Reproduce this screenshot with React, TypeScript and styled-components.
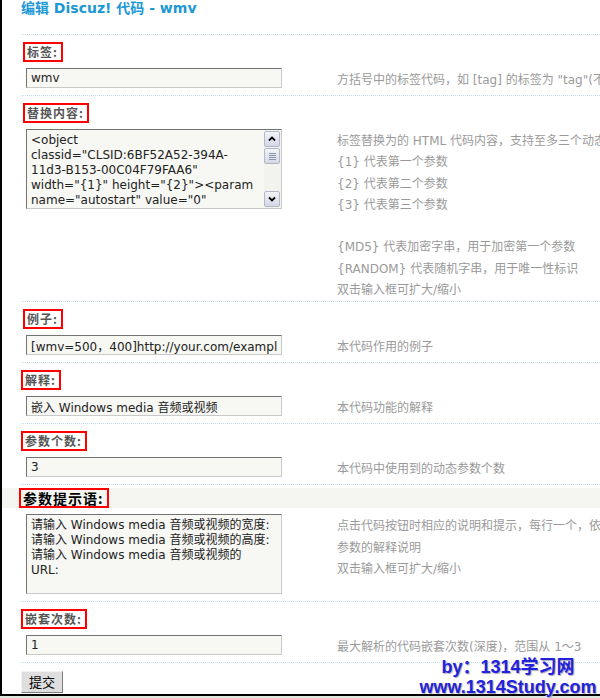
import React from "react";
import styled, { createGlobalStyle } from "styled-components";

const GlobalStyle = createGlobalStyle`
  html, body {
    margin: 0;
    padding: 0;
    background: #dfe9de;
  }
  body {
    width: 600px;
    height: 698px;
    overflow: hidden;
    font-family: "DejaVu Sans", "Noto Sans CJK SC", sans-serif;
    font-size: 12px;
  }
`;

const FONT = `"DejaVu Sans", "Noto Sans CJK SC", sans-serif`;

type Item = {
  label: string;
  kind: "input" | "area";
  value: string;
  desc: string[];
  shift?: number;
  hl?: boolean;
  scroll?: boolean;
};

const items: Item[] = [
  {
    label: "标签:",
    kind: "input",
    value: "wmv",
    desc: ["方括号中的标签代码，如 [tag] 的标签为 \"tag\"(不含括号)"],
    shift: 2,
  },
  {
    label: "替换内容:",
    kind: "area",
    value:
      '<object\nclassid="CLSID:6BF52A52-394A-\n11d3-B153-00C04F79FAA6"\nwidth="{1}" height="{2}"><param\nname="autostart" value="0"',
    desc: [
      "标签替换为的 HTML 代码内容，支持至多三个动态参数，例如：",
      "{1} 代表第一个参数",
      "{2} 代表第二个参数",
      "{3} 代表第三个参数",
      "",
      "{MD5} 代表加密字串，用于加密第一个参数",
      "{RANDOM} 代表随机字串，用于唯一性标识",
      "双击输入框可扩大/缩小",
    ],
    shift: 2,
    scroll: true,
  },
  {
    label: "例子:",
    kind: "input",
    value: "[wmv=500，400]http://your.com/example.wmv[/wmv]",
    desc: ["本代码作用的例子"],
    shift: 2,
  },
  {
    label: "解释:",
    kind: "input",
    value: "嵌入 Windows media 音频或视频",
    desc: ["本代码功能的解释"],
  },
  {
    label: "参数个数:",
    kind: "input",
    value: "3",
    desc: ["本代码中使用到的动态参数个数"],
  },
  {
    label: "参数提示语:",
    kind: "area",
    value:
      "请输入 Windows media 音频或视频的宽度:\n请输入 Windows media 音频或视频的高度:\n请输入 Windows media 音频或视频的\nURL:",
    desc: [
      "点击代码按钮时相应的说明和提示，每行一个，依次对应各个",
      "参数的解释说明",
      "双击输入框可扩大/缩小",
    ],
    hl: true,
  },
  {
    label: "嵌套次数:",
    kind: "input",
    value: "1",
    desc: ["最大解析的代码嵌套次数(深度)，范围从 1～3"],
  },
];

const Page = styled.div`
  position: relative;
  width: 600px;
  height: 698px;
  overflow: hidden;
`;

const Frame = styled.div`
  box-sizing: border-box;
  height: 696px;
  border-left: 2px solid #000;
  border-bottom: 2px solid #000;
  background: #fff;
  overflow: hidden;
`;

const Title = styled.h1`
  margin: 0;
  box-sizing: border-box;
  height: 34px;
  padding-left: 19px;
  font: bold 14px/17px ${FONT};
  color: #1b98d5;
  white-space: nowrap;
`;

const Section = styled.div`
  margin-left: 19px;
  border-top: 1px dotted #c6daea;
`;

const Header = styled.div<{ $hl?: boolean; $shift: number }>`
  display: flex;
  align-items: center;
  height: ${({ $hl }) => ($hl ? "20px" : "33px")};
  margin: ${({ $hl }) => ($hl ? "3px 0 6px -19px" : "0")};
  padding-left: ${({ $shift }) => $shift}px;
  background: ${({ $hl }) => ($hl ? "#f5f5f2" : "transparent")};
`;

const LabelBox = styled.span<{ $hl?: boolean }>`
  display: inline-flex;
  align-items: center;
  box-sizing: border-box;
  height: 20px;
  padding: 0 3px 0 2px;
  border: 2px solid #f00;
  font: bold ${({ $hl }) => ($hl ? "14px" : "12px")} "Noto Sans CJK SC",
    "DejaVu Sans", sans-serif;
  letter-spacing: 1px;
  color: ${({ $hl }) => ($hl ? "#000" : "#555")};
  white-space: nowrap;
`;

const Content = styled.div`
  display: grid;
  grid-template-columns: 256px auto;
  column-gap: 55px;
  align-items: start;
  padding-left: 5px;
`;

const Field = styled.input`
  box-sizing: border-box;
  width: 256px;
  height: 20px;
  margin: 0 0 7px;
  padding: 0 4px;
  border: 1px solid;
  border-color: #737373 #c9c9c9 #c9c9c9 #737373;
  background: #f7f7f4;
  font: 12px/18px ${FONT};
  color: #222;
  outline: none;
`;

const Area = styled.div`
  box-sizing: border-box;
  display: flex;
  width: 256px;
  height: 80px;
  margin-bottom: 7px;
  border: 1px solid;
  border-color: #737373 #c9c9c9 #c9c9c9 #737373;
  background: #f7f7f4;
`;

const AreaText = styled.div`
  flex: 1;
  padding: 3px 4px 0;
  font: 12px/15px ${FONT};
  color: #222;
  white-space: pre;
  overflow: hidden;
`;

const ScrollBar = styled.div`
  display: flex;
  flex-direction: column;
  width: 17px;
  padding: 1px 1px 1px 0;
  box-sizing: border-box;
  background: #f2f2ee;
`;

const ScrollBtn = styled.div`
  display: flex;
  align-items: center;
  justify-content: center;
  height: 16px;
  box-sizing: border-box;
  border: 1px solid #b4b9c9;
  border-radius: 2px;
  background: linear-gradient(#f3f4f9, #d3d8e6);
`;

const Thumb = styled(ScrollBtn)`
  margin-top: 1px;
  flex-direction: column;
  gap: 1px;
`;

const Grip = styled.span`
  width: 7px;
  height: 1px;
  background: #8d93a8;
`;

const Track = styled.div`
  flex: 1;
`;

const Desc = styled.div`
  padding-top: 2px;
  font: 12px/21.3px ${FONT};
  color: #9a9a9a;
  white-space: nowrap;
`;

const DescLine = styled.div`
  height: 21.3px;
`;

const Footer = styled.div`
  margin-left: 19px;
  border-top: 1px dotted #c6daea;
  padding-top: 8px;
`;

const Submit = styled.button`
  box-sizing: border-box;
  width: 42px;
  height: 22px;
  padding: 0;
  border: 1px solid;
  border-color: #f2f2f2 #7c7c7c #7c7c7c #f2f2f2;
  background: #dedede;
  font: 13px/18px "Noto Sans CJK SC", sans-serif;
  color: #000;
`;

const Watermark = styled.div`
  position: absolute;
  left: 418px;
  top: 657px;
  width: 180px;
  text-align: center;
  font: bold 18px/20px "Liberation Sans", "Noto Sans CJK SC", sans-serif;
  color: #2323dc;
  text-shadow: 1px 1px 1px #a9a9b9, -1px 0 0 #fff;
  white-space: nowrap;
`;

const Chevron = ({ down }: { down?: boolean }) => (
  <svg width="8" height="6" viewBox="0 0 8 6">
    <polyline
      points={down ? "1,1.5 4,4.5 7,1.5" : "1,4.5 4,1.5 7,4.5"}
      fill="none"
      stroke="#000"
      strokeWidth="1.8"
    />
  </svg>
);

const Row = ({ item }: { item: Item }) => (
  <Section>
    <Header $hl={item.hl} $shift={item.hl ? 17 : item.shift ?? 0}>
      <LabelBox $hl={item.hl}>{item.label}</LabelBox>
    </Header>
    <Content>
      {item.kind === "input" ? (
        <Field readOnly defaultValue={item.value} />
      ) : (
        <Area>
          <AreaText>{item.value}</AreaText>
          {item.scroll && (
            <ScrollBar>
              <ScrollBtn>
                <Chevron />
              </ScrollBtn>
              <Thumb>
                <Grip />
                <Grip />
                <Grip />
                <Grip />
              </Thumb>
              <Track />
              <ScrollBtn>
                <Chevron down />
              </ScrollBtn>
            </ScrollBar>
          )}
        </Area>
      )}
      <Desc>
        {item.desc.map((d, i) => (
          <DescLine key={i}>{d}</DescLine>
        ))}
      </Desc>
    </Content>
  </Section>
);

export default function App() {
  return (
    <Page>
      <GlobalStyle />
      <Frame>
        <Title>编辑 Discuz! 代码 - wmv</Title>
        {items.map((item) => (
          <Row key={item.label} item={item} />
        ))}
        <Footer>
          <Submit>提交</Submit>
        </Footer>
      </Frame>
      <Watermark>
        by：1314学习网
        <br />
        www.1314Study.com
      </Watermark>
    </Page>
  );
}
